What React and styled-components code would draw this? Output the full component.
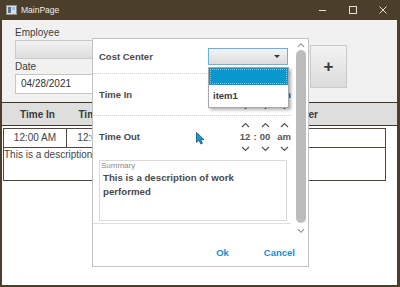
import React from "react";
import styled, { createGlobalStyle } from "styled-components";

const Global = createGlobalStyle`
  html, body { margin: 0; padding: 0; overflow: hidden; background: #3a2f20; }
  body { font-family: "Liberation Sans", Arial, sans-serif; }
  * { box-sizing: border-box; }
`;

const Frame = styled.div`
  position: relative;
  width: 400px;
  height: 287px;
  background: #4b3e2b;
  display: flex;
  flex-direction: column;
`;

const TitleBar = styled.div`
  height: 20px;
  flex: none;
  display: flex;
  align-items: center;
  padding: 0 2px 0 6px;
  color: #f1ede6;
`;

const Title = styled.span`
  flex: 1;
  font-size: 8.5px;
  margin-left: 4px;
`;

const WinButton = styled.div`
  width: 30px;
  height: 20px;
  display: flex;
  align-items: center;
  justify-content: center;
`;

const Body = styled.div`
  flex: 1;
  margin: 0 3px 2px 2px;
  background: #fff;
  display: flex;
  flex-direction: column;
  overflow: hidden;
`;

const Form = styled.div`
  height: 82px;
  flex: none;
  background: #f1f1f1;
  display: flex;
  gap: 8px;
  padding: 7px 0 0 13px;
`;

const Fields = styled.div`
  width: 287px;
  display: flex;
  flex-direction: column;
`;

const FieldLabel = styled.div`
  font-size: 10px;
  line-height: 12px;
  color: #3c3c3c;
  margin-top: ${(p) => (p.$first ? 0 : 2)}px;
  margin-bottom: 1px;
`;

const Combo = styled.div`
  height: 19px;
  border: 1px solid #c9c9c9;
  background: linear-gradient(#f3f3f3, #dcdcdc);
`;

const DateInput = styled.div`
  height: 20px;
  border: 1px solid #c6c6c6;
  background: #fff;
  font-size: 10px;
  line-height: 18px;
  color: #333;
  padding-left: 5px;
`;

const PlusButton = styled.div`
  margin-top: 18px;
  width: 37px;
  height: 43px;
  border: 1px solid #c9c9c9;
  background: linear-gradient(#f3f3f3, #dcdcdc);
  display: flex;
  align-items: center;
  justify-content: center;
  font-size: 17px;
  font-weight: bold;
  color: #3a3a3a;
`;

const Table = styled.div`
  flex: 1;
  background: #fff;
`;

const HeaderRow = styled.div`
  height: 24px;
  border-top: 1px solid #3e3428;
  border-bottom: 1px solid #3e3428;
  background: #dedede;
  display: flex;
  align-items: center;
`;

const HeaderCell = styled.div`
  width: ${(p) => p.$w}px;
  flex: none;
  text-align: center;
  font-size: 10px;
  font-weight: bold;
  color: #3a3a3a;
  white-space: nowrap;
`;

const RowBox = styled.div`
  margin: 2px 0 0 1px;
  width: 383px;
  border: 1px solid #52483d;
`;

const CellRow = styled.div`
  height: 19px;
  border-bottom: 1px solid #52483d;
  display: flex;
`;

const Cell = styled.div`
  width: ${(p) => p.$w}px;
  flex: none;
  border-right: 1px solid #52483d;
  font-size: 10px;
  line-height: 18px;
  text-align: center;
  color: #444;
`;

const DescRow = styled.div`
  height: 32px;
  font-size: 10px;
  line-height: 12px;
  padding-top: 1px;
  color: #444;
`;

const Dialog = styled.div`
  position: absolute;
  left: 92px;
  top: 38px;
  width: 217px;
  height: 229px;
  border: 1px solid #c2c2c2;
  background: #fff;
  display: flex;
  flex-direction: column;
`;

const ScrollArea = styled.div`
  height: 199px;
  flex: none;
  display: flex;
`;

const Content = styled.div`
  flex: 1;
  overflow: hidden;
  display: flex;
  flex-direction: column;
`;

const FieldRow = styled.div`
  height: ${(p) => p.$h}px;
  flex: none;
  margin-right: 3px;
  padding: 0 3px 0 6px;
  display: flex;
  align-items: center;
  border-bottom: ${(p) => (p.$sep ? "1px dotted #cfcfcf" : "none")};
`;

const RowLabel = styled.div`
  flex: 1;
  font-size: 9.5px;
  font-weight: bold;
  color: #4a4a4a;
`;

const CostCombo = styled.div`
  width: 80px;
  height: 17px;
  border: 1px solid #62b5e0;
  background: linear-gradient(#f4f4f4, #dcdcdc);
  display: flex;
  align-items: center;
  justify-content: flex-end;
  padding-right: 7px;
`;

const Caret = styled.span`
  width: 0;
  height: 0;
  border-left: 3px solid transparent;
  border-right: 3px solid transparent;
  border-top: 3px solid #333;
`;

const TimeControl = styled.div`
  display: flex;
  margin-right: -5px;
`;

const Spinner = styled.div`
  width: ${(p) => p.$w}px;
  display: flex;
  flex-direction: column;
  align-items: center;
  gap: 3px;
`;

const SpinText = styled.div`
  font-size: 9.5px;
  font-weight: bold;
  line-height: 12px;
  color: #555;
`;

const Colon = styled.div`
  width: 0;
  display: flex;
  justify-content: center;
  align-items: center;
  font-size: 9.5px;
  font-weight: bold;
  color: #555;
`;

const SummaryWrap = styled.div`
  flex: none;
  margin-right: 3px;
  padding: 3px 4px 2px 6px;
  border-bottom: 1px solid #dedede;
`;

const SummaryBox = styled.div`
  height: 61px;
  border: 1px solid #d9d9d9;
`;

const Legend = styled.div`
  font-size: 8px;
  line-height: 10px;
  color: #8a8a8a;
  padding-left: 1px;
`;

const SummaryText = styled.div`
  max-width: 160px;
  font-size: 9.7px;
  line-height: 14px;
  font-weight: bold;
  color: #4a4a4a;
  padding-left: 3px;
`;

const ScrollBar = styled.div`
  width: 14px;
  flex: none;
  display: flex;
  flex-direction: column;
  align-items: center;
`;

const ScrollArrow = styled.div`
  height: ${(p) => p.$h}px;
  display: flex;
  align-items: ${(p) => (p.$down ? "flex-start" : "center")};
  padding-top: ${(p) => (p.$down ? 5 : 0)}px;
`;

const Thumb = styled.div`
  width: 10px;
  height: 173px;
  border-radius: 5px;
  background: #bcbcbc;
`;

const ButtonBar = styled.div`
  flex: 1;
  display: flex;
  justify-content: flex-end;
  align-items: center;
  gap: 11px;
  padding-right: 1px;
`;

const TextButton = styled.div`
  padding: 0 12px;
  font-size: 9.5px;
  font-weight: bold;
  color: #1a8dd0;
`;

const DropList = styled.div`
  position: absolute;
  left: 115px;
  top: 28px;
  width: 81px;
  height: 41px;
  border: 1px solid #a8a8a8;
  background: #fff;
  box-shadow: 2px 2px 3px rgba(0, 0, 0, 0.3);
`;

const DropItem = styled.div`
  height: ${(p) => (p.$selected ? 17 : 22)}px;
  background: ${(p) => (p.$selected ? "#0a97cd" : "#fff")};
  outline: ${(p) => (p.$selected ? "1px dotted rgba(255,255,255,0.45)" : "none")};
  outline-offset: -2px;
  font-size: 9.5px;
  font-weight: bold;
  color: #3a3a3a;
  padding-left: 4px;
  line-height: 22px;
`;

const Cursor = styled.svg`
  position: absolute;
  left: 196px;
  top: 132px;
`;

const Chevron = ({ up, color = "#555", w = 9 }) => (
  <svg width={w} height="6" viewBox="0 0 9 6">
    <path
      d={up ? "M1 5 L4.5 1.5 L8 5" : "M1 1 L4.5 4.5 L8 1"}
      fill="none"
      stroke={color}
      strokeWidth="1.2"
    />
  </svg>
);

const SpinColumn = ({ text, w }) => (
  <Spinner $w={w}>
    <Chevron up />
    <SpinText>{text}</SpinText>
    <Chevron />
  </Spinner>
);

const Time = () => (
  <TimeControl>
    <SpinColumn text="12" w={20} />
    <Colon>:</Colon>
    <SpinColumn text="00" w={20} />
    <SpinColumn text="am" w={18} />
  </TimeControl>
);

export default function App() {
  return (
    <>
      <Global />
      <Frame>
        <TitleBar>
          <svg width="11" height="10" viewBox="0 0 11 10">
            <rect x="0.5" y="0.5" width="10" height="9" fill="#d9dde2" stroke="#8d9296" />
            <rect x="2" y="2" width="3" height="6" fill="#5b7389" />
            <rect x="6" y="2" width="3" height="3" fill="#9fc3de" />
          </svg>
          <Title>MainPage</Title>
          <WinButton>
            <svg width="8" height="8" viewBox="0 0 8 8">
              <path d="M0 4.5 H7" stroke="#e6e2da" strokeWidth="1" />
            </svg>
          </WinButton>
          <WinButton>
            <svg width="8" height="8" viewBox="0 0 8 8">
              <rect x="0.5" y="0.5" width="7" height="7" fill="none" stroke="#e6e2da" />
            </svg>
          </WinButton>
          <WinButton>
            <svg width="8" height="8" viewBox="0 0 8 8">
              <path d="M0.5 0.5 L7.5 7.5 M7.5 0.5 L0.5 7.5" stroke="#e6e2da" strokeWidth="1" />
            </svg>
          </WinButton>
        </TitleBar>
        <Body>
          <Form>
            <Fields>
              <FieldLabel $first>Employee</FieldLabel>
              <Combo />
              <FieldLabel>Date</FieldLabel>
              <DateInput>04/28/2021</DateInput>
            </Fields>
            <PlusButton>+</PlusButton>
          </Form>
          <Table>
            <HeaderRow>
              <HeaderCell $w={71}>Time In</HeaderCell>
              <HeaderCell $w={54}>Time Out</HeaderCell>
              <HeaderCell $w={106}>Summary</HeaderCell>
              <HeaderCell $w={113}>Cost Center</HeaderCell>
            </HeaderRow>
            <RowBox>
              <CellRow>
                <Cell $w={63}>12:00 AM</Cell>
                <Cell $w={64}>12:00 AM</Cell>
              </CellRow>
              <DescRow>This is a description of work performed</DescRow>
            </RowBox>
          </Table>
        </Body>

        <Dialog>
          <ScrollArea>
            <Content>
              <FieldRow $h={35} $sep>
                <RowLabel>Cost Center</RowLabel>
                <CostCombo>
                  <Caret />
                </CostCombo>
              </FieldRow>
              <FieldRow $h={42} $sep>
                <RowLabel>Time In</RowLabel>
                <Time />
              </FieldRow>
              <FieldRow $h={41}>
                <RowLabel>Time Out</RowLabel>
                <Time />
              </FieldRow>
              <SummaryWrap>
                <SummaryBox>
                  <Legend>Summary</Legend>
                  <SummaryText>This is a description of work performed</SummaryText>
                </SummaryBox>
              </SummaryWrap>
            </Content>
            <ScrollBar>
              <ScrollArrow $h={11}>
                <Chevron up color="#8a8a8a" w={8} />
              </ScrollArrow>
              <Thumb />
              <ScrollArrow $h={15} $down>
                <Chevron color="#8a8a8a" w={8} />
              </ScrollArrow>
            </ScrollBar>
          </ScrollArea>
          <ButtonBar>
            <TextButton>Ok</TextButton>
            <TextButton>Cancel</TextButton>
          </ButtonBar>
          <DropList>
            <DropItem $selected />
            <DropItem>item1</DropItem>
          </DropList>
        </Dialog>

        <Cursor width="10" height="13" viewBox="0 0 10 13">
          <path
            d="M0.5 0.5 L0.5 10.5 L3 8.2 L4.8 12 L6.4 11.3 L4.7 7.6 L8 7.6 Z"
            fill="#2a92d2"
            stroke="#0d4f7f"
            strokeWidth="0.8"
          />
        </Cursor>
      </Frame>
    </>
  );
}
